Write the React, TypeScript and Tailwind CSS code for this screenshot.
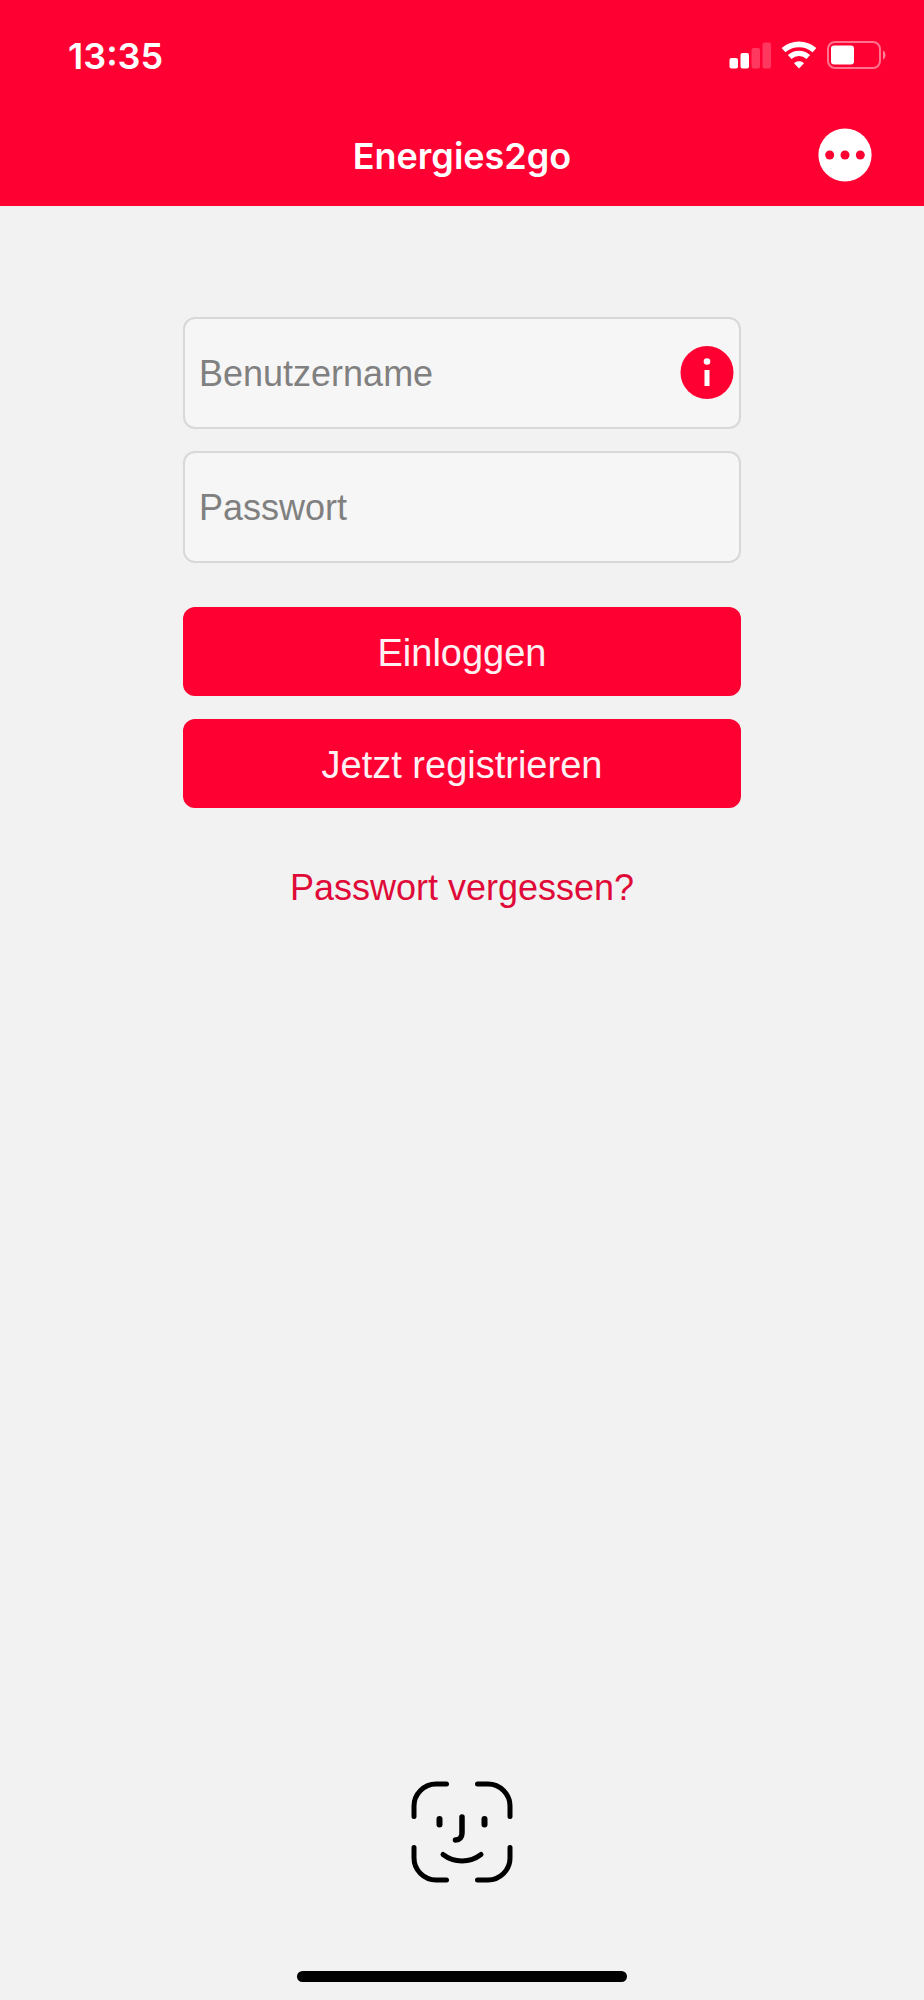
import { useState } from "react";

function SignalIcon() {
  return (
    <svg width="42" height="28" viewBox="0 0 42 28" fill="#fff" aria-hidden="true">
      <rect x="0.500" y="17" width="8.500" height="10.500" rx="2" />
      <rect x="11.500" y="12" width="8.500" height="15.500" rx="2" />
      <rect x="22.500" y="7" width="8.500" height="20.500" rx="2" opacity="0.22" />
      <rect x="33.500" y="1.500" width="8.500" height="26" rx="2" opacity="0.22" />
    </svg>
  );
}

function WifiIcon() {
  return (
    <svg width="36" height="28" viewBox="0 0 36 28" fill="none" stroke="#fff" aria-hidden="true">
      <path d="M2.500 9.200C11.300 1.400 24.700 1.400 33.500 9.200" strokeWidth="5.600" />
      <path d="M8.700 16C14.100 11.200 21.900 11.200 27.300 16" strokeWidth="5.400" />
      <path d="M18 27.500L13 22.200C16 19.600 20 19.600 23 22.200Z" fill="#fff" stroke="none" />
    </svg>
  );
}

function BatteryIcon() {
  return (
    <svg width="60" height="28" viewBox="0 0 60 28" aria-hidden="true">
      <rect x="1" y="1" width="52" height="26" rx="7" fill="none" stroke="#fff" strokeWidth="2" opacity="0.45" />
      <path d="M56 9.500C59.300 10.500 59.300 17.500 56 18.500Z" fill="#fff" opacity="0.5" />
      <rect x="4" y="4.500" width="23" height="19" rx="3" fill="#fff" />
    </svg>
  );
}

function MoreIcon() {
  return (
    <svg width="54" height="54" viewBox="0 0 54 54" aria-hidden="true">
      <circle cx="27" cy="27" r="26.600" fill="#fff" />
      <g fill="#ff0032">
        <circle cx="11.700" cy="27" r="4.500" />
        <circle cx="27" cy="27" r="4.500" />
        <circle cx="42.300" cy="27" r="4.500" />
      </g>
    </svg>
  );
}

function InfoIcon() {
  return (
    <svg width="54" height="54" viewBox="0 0 54 54" aria-hidden="true">
      <circle cx="27" cy="26.500" r="26.500" fill="#ff0032" />
      <circle cx="27" cy="15.500" r="3.300" fill="#fff" />
      <rect x="24.500" y="24" width="5" height="16" fill="#fff" />
    </svg>
  );
}

function FaceIcon() {
  return (
    <svg width="102" height="102" viewBox="0 0 102 102" fill="none" stroke="#000" strokeLinecap="round" aria-hidden="true">
      <g strokeWidth="5">
        <path d="M3 35.500V25C3 13 13 3 25 3H35.500" />
        <path d="M66.500 3H77C89 3 99 13 99 25V35.500" />
        <path d="M99 66.500V77C99 89 89 99 77 99H66.500" />
        <path d="M35.500 99H25C13 99 3 89 3 77V66.500" />
        <path d="M32 73.500C43 82 59 82 70 73.500" />
      </g>
      <g strokeWidth="6">
        <path d="M28.500 38V43.500" />
        <path d="M73.500 38V43.500" />
      </g>
      <path d="M51 36V52C51 56.500 48.500 59 44.500 59" strokeWidth="5.500" />
    </svg>
  );
}

const fieldClass =
  "h-28 w-full rounded-xl border-2 border-[#d8d8d8] bg-[#f6f6f6] pt-0.5 pl-3.5 text-4xl text-[#333] outline-none placeholder:text-[#808080]";
const buttonClass = "h-[89px] w-full rounded-xl bg-[#ff0032] pt-[3px] text-[38px] text-[#fff0f3]";

export default function App() {
  const [user, setUser] = useState("");
  const [password, setPassword] = useState("");

  return (
    <div className="flex min-h-screen flex-col bg-[#f2f2f2] font-['Liberation_Sans',Arial,sans-serif]">
      <header className="bg-[#ff0032] font-['Inter',sans-serif] text-white">
        <div className="flex h-28 items-center justify-between pr-[37px] pl-[68px]">
          <time className="text-4xl font-semibold">13:35</time>
          <div className="flex items-center gap-2.5 pb-0.5">
            <SignalIcon />
            <WifiIcon />
            <BatteryIcon />
          </div>
        </div>
        <div className="grid h-[94px] grid-cols-[1fr_auto_1fr] items-start px-[52px] pt-4">
          <h1 className="col-start-2 text-4xl leading-[56px] font-semibold">Energies2go</h1>
          <button type="button" aria-label="Menü" className="justify-self-end">
            <MoreIcon />
          </button>
        </div>
      </header>

      <main className="flex grow flex-col items-center px-6 pt-[111px] pb-[18px]">
        <form className="flex w-full max-w-[558px] flex-col" onSubmit={(e) => e.preventDefault()}>
          <div className="relative">
            <input
              type="text"
              aria-label="Benutzername"
              placeholder="Benutzername"
              value={user}
              onChange={(e) => setUser(e.target.value)}
              className={fieldClass}
            />
            <button type="button" aria-label="Info" className="absolute inset-y-0 right-[7px] flex items-center">
              <InfoIcon />
            </button>
          </div>
          <input
            type="password"
            aria-label="Passwort"
            placeholder="Passwort"
            value={password}
            onChange={(e) => setPassword(e.target.value)}
            className={`mt-[22px] ${fieldClass}`}
          />
          <button type="submit" className={`mt-11 ${buttonClass}`}>
            Einloggen
          </button>
          <button type="button" className={`mt-[23px] ${buttonClass}`}>
            Jetzt registrieren
          </button>
        </form>
        <a href="#passwort" className="mt-[60px] text-4xl text-[#e00a38]">
          Passwort vergessen?
        </a>

        <button type="button" aria-label="Face ID" className="mt-auto">
          <FaceIcon />
        </button>
        <div className="mt-[88px] h-[11px] w-[330px] max-w-full rounded-full bg-black" />
      </main>
    </div>
  );
}
